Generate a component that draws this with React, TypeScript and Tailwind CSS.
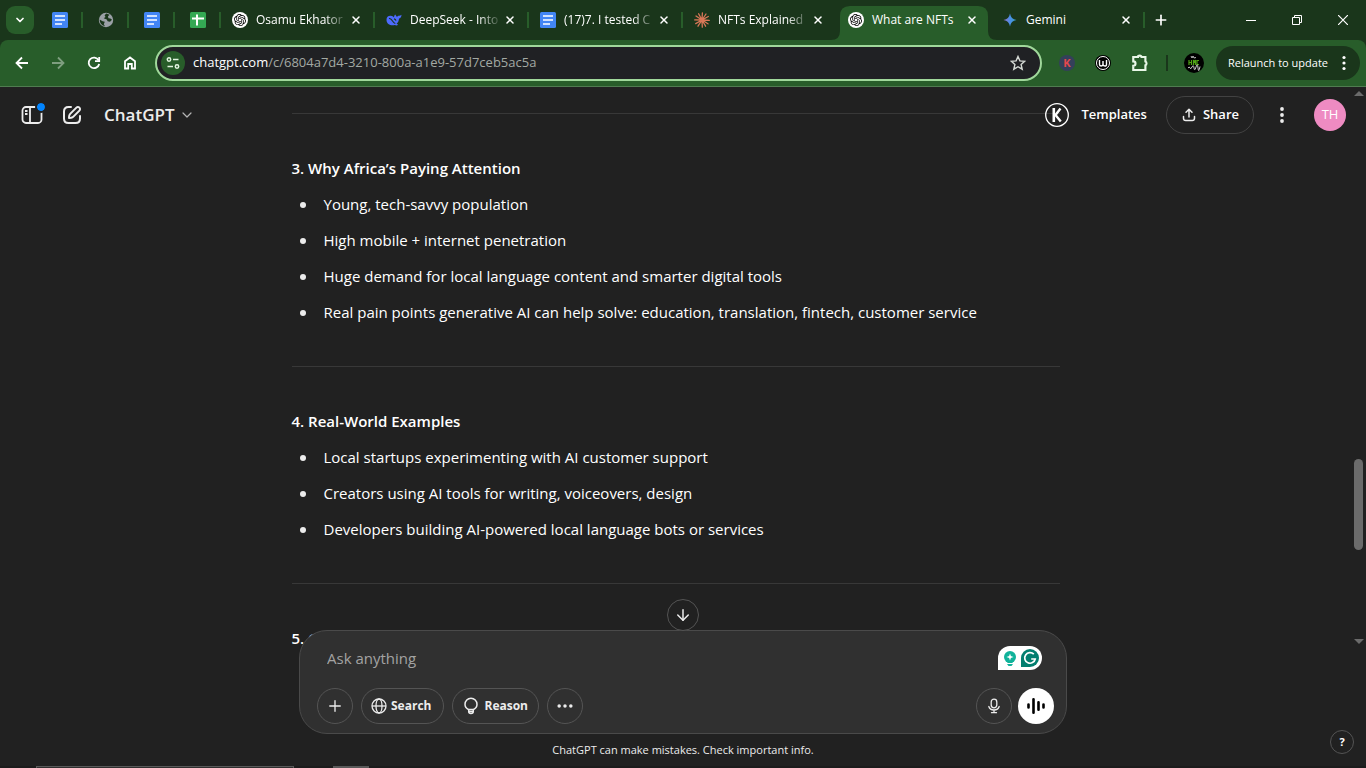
import type { ReactNode } from 'react';
import { ArrowDown, ChevronDown, Ellipsis, Plus, X } from 'lucide-react';
import { SiOpenai } from 'react-icons/si';

function DocsIcon() {
  return (
    <svg viewBox="0 0 16 16" className="size-4 shrink-0">
      <rect width="16" height="16" rx="1.5" fill="#4285f4" />
      <path d="M3 4h10M3 8h10M3 12h7" stroke="#fff" strokeWidth="1.6" />
    </svg>
  );
}

function SheetsIcon() {
  return (
    <svg viewBox="0 0 16 16" className="size-4 shrink-0">
      <rect width="16" height="16" rx="1.5" fill="#34a853" />
      <path d="M2 6.5h12M7 2.5v11" stroke="#fff" strokeWidth="2" />
    </svg>
  );
}

function WorldIcon() {
  return (
    <svg viewBox="0 0 16 16" className="size-4 shrink-0">
      <circle cx="8" cy="8" r="7.2" fill="#9aa0a6" />
      <path d="M8.3 1.6 6.6 3.2 7.5 5 5.7 6.2 8.8 7.4 9.6 9.2 12 9.8 14 7.8 12.4 6.4 10.4 6.2 10 4.2 11.6 2.8zM1.6 7.6 4.6 9.2 6.8 9.8 5.8 12.2 7 14.2C4 13.8 1.8 11.4 1.6 7.6z" fill="#1a361b" />
    </svg>
  );
}

function ChatIcon() {
  return (
    <span className="flex size-4 shrink-0 items-center justify-center rounded-full bg-white text-black">
      <SiOpenai className="size-3" />
    </span>
  );
}

function WhaleIcon() {
  return (
    <svg viewBox="0 0 16 16" className="size-4 shrink-0">
      <path d="M9.3 2.6c.5 1 .9 1.7 1.7 2.3.5-.9 1-1.2 2-1.2.8 0 1.7-.4 2.5-1-.1 2.2-.9 3.5-2.5 3.8-.2 2.4-1 4.2-2.4 5.3l1.6 1c-1.200.8-2.300.7-3.400.2C4.800 14.200.6 12 .5 7.900.4 5 2.400 3.500 4.900 3.800c1.400.2 2.200.8 3.100 1.600C8.100 4.200 8.400 3.300 9.300 2.600z" fill="#4d6bfe" />
      <path d="M3 6.300c2.200.3 3.200 2 4.300 3.700.5.800 1.200 1.300 2 1.500M8 6.900c1 .1 1.800.8 2 1.800" fill="none" stroke="#1a361b" strokeWidth="1.1" />
    </svg>
  );
}

function BurstIcon() {
  return (
    <svg viewBox="0 0 16 16" className="size-4 shrink-0" stroke="#d97757" strokeWidth="1.3" strokeLinecap="round">
      <path d="M8 8 8.4.8M8 8 12 2M8 8l6.300-3.500M8 8l7.300.4M8 8l6 3.800M8 8l3.600 6.200M8 8l.3 7.200M8 8l-4 6.200M8 8l-6.300 3.600M8 8 .7 7.900M8 8 2 4M8 8 4.600 1.700" />
    </svg>
  );
}

function GeminiIcon() {
  return (
    <svg viewBox="0 0 16 16" className="size-4 shrink-0">
      <defs>
        <linearGradient id="spark" x1="0" x2="1">
          <stop offset="0" stopColor="#9b72cb" />
          <stop offset="0.5" stopColor="#4a8fe8" />
          <stop offset="1" stopColor="#3aa0c8" />
        </linearGradient>
      </defs>
      <path d="M8 1.500C8.600 5.300 10.700 7.400 14.500 8 10.700 8.600 8.600 10.700 8 14.500 7.400 10.700 5.300 8.600 1.500 8 5.300 7.400 7.400 5.300 8 1.500z" fill="url(#spark)" />
    </svg>
  );
}

const pinned = [DocsIcon, WorldIcon, DocsIcon, SheetsIcon];

const tabs = [
  { title: 'Osamu Ekhator', icon: ChatIcon, fade: true },
  { title: 'DeepSeek - Into', icon: WhaleIcon, fade: true },
  { title: '(17)7. I tested C', icon: DocsIcon, fade: true },
  { title: 'NFTs Explained', icon: BurstIcon, fade: true, noLine: true },
  { title: 'What are NFTs', icon: ChatIcon, active: true },
  { title: 'Gemini', icon: GeminiIcon },
];

function TabStrip() {
  return (
    <div className="flex h-10 items-stretch pl-1.5">
      <button aria-label="Search tabs" className="mr-[3px] mt-1.5 flex size-7 shrink-0 items-center justify-center rounded-[9px] bg-[#285d2a]">
        <ChevronDown className="size-3" strokeWidth={3.5} />
      </button>
      {pinned.map((Icon, i) => (
        <button key={i} aria-label={`Pinned tab ${i + 1}`} className="flex w-[46px] shrink-0 items-center">
          <span className="flex flex-1 justify-center pl-0.5"><Icon /></span>
          <span className="h-4 w-0.5 bg-[#285d2a]" />
        </button>
      ))}
      {tabs.map((tab) => (
        <div
          key={tab.title}
          className={`relative flex max-w-[154px] flex-1 items-center pl-[11px] ${tab.active ? 'z-10' : ''}`}
        >
          {tab.active && (
            <svg viewBox="0 0 166 34" preserveAspectRatio="none" className="absolute inset-x-[-6px] bottom-0 h-[34px] w-[calc(100%+12px)]">
              <path d="M0 34q9 0 9-9V10Q9 0 19 0h128q10 0 10 10v15q0 9 9 9z" fill="#285d2a" />
            </svg>
          )}
          <a href="#" className="relative flex min-w-0 flex-1 items-center gap-2">
            <tab.icon />
            <span
              className={`min-w-0 flex-1 whitespace-nowrap text-[12px] leading-4 ${
                tab.fade ? '[mask-image:linear-gradient(to_right,black_75%,transparent)]' : ''
              }`}
            >
              {tab.title}
            </span>
          </a>
          <button aria-label={`Close ${tab.title}`} className="relative mr-[9px] flex size-4 items-center justify-center">
            <X className="size-3" strokeWidth={3} />
          </button>
          {!tab.active && !tab.noLine ? <span className="h-4 w-0.5 bg-[#285d2a]" /> : <span className="w-0.5" />}
        </div>
      ))}
      <button aria-label="New tab" className="ml-2 flex w-4 shrink-0 items-center justify-center">
        <Plus className="size-4" strokeWidth={2.5} />
      </button>
      <div className="ml-auto flex shrink-0">
        <button aria-label="Minimize" className="flex w-[46px] items-center justify-center">
          <span className="h-px w-2.5 bg-white" />
        </button>
        <button aria-label="Restore" className="flex w-[46px] items-center justify-center">
          <svg viewBox="0 0 10 10" className="size-2.5" fill="none" stroke="#fff">
            <path d="M.5 2.500h7v7h-7zM2.500 2.500v-2h7v7h-2" />
          </svg>
        </button>
        <button aria-label="Close window" className="flex w-[46px] items-center justify-center">
          <svg viewBox="0 0 10 10" className="size-2.5" stroke="#fff" strokeWidth="1.2">
            <path d="M0 0l10 10M10 0 0 10" />
          </svg>
        </button>
      </div>
    </div>
  );
}

function NavButton({ label, dim, children }: { label: string; dim?: boolean; children: ReactNode }) {
  return (
    <button aria-label={label} className={`flex size-9 shrink-0 items-center justify-center ${dim ? 'opacity-40' : ''}`}>
      <svg viewBox="0 0 16 16" className="size-4" fill="none" stroke="currentColor" strokeWidth="1.8">
        {children}
      </svg>
    </button>
  );
}

function Toolbar() {
  return (
    <div className="flex h-[47px] items-center rounded-t-lg border-b border-[#4f7c50] bg-[#285d2a] pl-1 pr-1.5">
      <NavButton label="Back"><path d="M14 8H3M8 2.500 2.500 8 8 13.500" /></NavButton>
      <NavButton label="Forward" dim><path d="M2 8h11M8 2.500 13.500 8 8 13.500" /></NavButton>
      <NavButton label="Reload">
        <path d="M12.600 5.200A5.300 5.300 0 1 0 13.200 9" />
        <path d="M13.200 2v4.200H9" />
      </NavButton>
      <NavButton label="Home"><path d="M3 13.500V6.300l5-3.800 5 3.800v7.200H9.800V9H6.200v4.500z" /></NavButton>
      <div className="ml-[7px] flex h-9 flex-1 items-center rounded-full border-2 border-[#a0d89b] bg-[#202124] pl-1 pr-3.5">
        <button aria-label="Site information" className="flex size-6 items-center justify-center rounded-full bg-[#285d2a]">
          <svg viewBox="0 0 16 16" className="size-4" fill="none" stroke="#e3f5e1" strokeWidth="1.5">
            <circle cx="4" cy="4.5" r="1.7" />
            <circle cx="12" cy="11.5" r="1.7" />
            <path d="M8 4.500h5.500M2.500 11.500H8" />
          </svg>
        </button>
        <a href="#" className="ml-2 flex-1 text-[13px] text-[#a3a9a3]">
          <span className="text-white">chatgpt.com</span>/c/6804a7d4-3210-800a-a1e9-57d7ceb5ac5a
        </a>
        <button aria-label="Bookmark this tab">
          <svg viewBox="0 0 16 16" className="size-4" fill="none" stroke="#d5dad5" strokeWidth="1.4">
            <path d="m8 1.500 1.900 4.400 4.800.4-3.600 3.200 1.100 4.700L8 11.700l-4.200 2.500 1.100-4.700L1.300 6.300l4.800-.4z" />
          </svg>
        </button>
      </div>
      <button aria-label="K extension" className="ml-[17px] flex size-4 items-center justify-center rounded-full bg-[#34405a] text-[11px] font-bold text-[#e5484d]">
        K
      </button>
      <button aria-label="W extension" className="ml-5 flex size-4 items-center justify-center rounded-full bg-black">
        <svg viewBox="0 0 16 16" className="size-4" fill="none" stroke="#fff">
          <circle cx="8" cy="8" r="6.5" strokeWidth="1" />
          <path d="M4.500 5v4.500q0 1.500 1.700 1.500T8 9.300V6v3.300Q8 11 9.800 11t1.700-1.500V5" strokeWidth="1.4" />
        </svg>
      </button>
      <button aria-label="Extensions" className="ml-5">
        <svg viewBox="0 0 16 16" className="size-[18px]" fill="none" stroke="#e9f7e8" strokeWidth="1.9">
          <path d="M2 2.700h4.200a1.600 1.200 0 0 1 3.200 0h3.400v4a1.300 1.700 0 0 1 0 3.300v4.200H2v-3.700a2 2 0 0 0 0-4z" />
        </svg>
      </button>
      <span className="ml-[17px] h-4 w-0.5 bg-[#1a361b]" />
      <button aria-label="Profile" className="ml-4 flex size-5 flex-col items-center justify-center rounded-full bg-black">
        <svg viewBox="0 0 20 20" className="size-5" fill="none">
          <path d="M7 3l1 2 1-2 1 2 2-.5" stroke="#bbb" />
          <path d="M5 7v5M5 9.500h2.500M7.500 7v5M9.500 12V7l1 2 1-2v5M15 7.500h-2v4h2" stroke="#4fa315" strokeWidth="1.2" />
          <path d="M4 15q1.500-2 2 0t2-1 2 1 2-1 2 1 2-1.500" stroke="#ccc" />
        </svg>
      </button>
      <button className="ml-3 flex h-[34px] items-center rounded-full bg-[#1a361b] pl-3 pr-3.5 text-[11px]">
        Relaunch to update
        <svg viewBox="0 0 4 16" className="ml-3.5 h-4 w-1" fill="currentColor">
          <circle cx="2" cy="2.5" r="1.6" />
          <circle cx="2" cy="8" r="1.6" />
          <circle cx="2" cy="13.5" r="1.6" />
        </svg>
      </button>
    </div>
  );
}

function ChatHeader() {
  return (
    <header className="absolute inset-x-0 top-0 z-10 flex h-14 items-center pl-5 pr-5">
      <button aria-label="Open sidebar" className="relative">
        <svg viewBox="0 0 24 24" className="size-6" fill="none" stroke="#ececec" strokeWidth="1.8">
          <rect x="2.5" y="4" width="19" height="16" rx="3.5" />
          <path d="M10 4v16M5 8h2.500M5 11h2.500" />
        </svg>
        <span className="absolute -right-px top-0 size-2 rounded-full bg-[#0285ff] outline-2 outline-[#212121]" />
      </button>
      <button aria-label="New chat" className="ml-4">
        <svg viewBox="0 0 24 24" className="size-6" fill="none" stroke="#ececec" strokeWidth="2">
          <path d="M11 4H8.500C5.500 4 4 5.500 4 8.500v7C4 18.500 5.500 20 8.500 20h7c3 0 4.500-1.500 4.500-4.500V13" strokeLinecap="round" />
          <path d="M16.400 4.600a2.100 2.100 0 0 1 3 3l-6 6c-.7.700-1.400 1-2.300 1.200l-2.100.2.200-2.100c.2-.9.500-1.600 1.200-2.300z" strokeLinejoin="round" />
        </svg>
      </button>
      <button className="ml-5 flex items-center gap-1 text-[17px] font-semibold text-[#ececec]">
        ChatGPT
        <ChevronDown className="size-4 text-[#b4b4b4]" strokeWidth={1.8} />
      </button>
      <a href="#" className="ml-auto flex items-center gap-3 text-[13px] font-semibold">
        <svg viewBox="0 0 24 24" className="size-6" fill="none" stroke="#fff">
          <circle cx="12" cy="12" r="11.3" strokeWidth="1.3" />
          <path d="M8.800 5v14" strokeWidth="2.6" />
          <path d="M15.500 5.500 10.500 12l5.300 6.500" strokeWidth="2.4" />
        </svg>
        Templates
      </a>
      <button className="ml-[19px] flex h-[38px] items-center gap-1.5 rounded-full border border-[#424242] px-3.5 text-[13px] font-semibold">
        <svg viewBox="0 0 16 16" className="size-4" fill="none" stroke="#ececec" strokeWidth="1.5" strokeLinecap="round" strokeLinejoin="round">
          <path d="M8 10V2.500M5 5.200l3-3 3 3M2.500 9.500v1.700c0 1.600.8 2.300 2.300 2.300h6.400c1.500 0 2.300-.7 2.300-2.300V9.500" />
        </svg>
        Share
      </button>
      <button aria-label="More options" className="ml-[26px]">
        <svg viewBox="0 0 4 18" className="h-[18px] w-1" fill="#ececec">
          <circle cx="2" cy="3" r="1.9" />
          <circle cx="2" cy="9" r="1.9" />
          <circle cx="2" cy="15" r="1.9" />
        </svg>
      </button>
      <button aria-label="Account" className="ml-[30px] size-8 rounded-full bg-[#ee8bc2] text-[13px] text-white">
        TH
      </button>
    </header>
  );
}

const sections = [
  {
    title: '3. Why Africa’s Paying Attention',
    items: [
      'Young, tech-savvy population',
      'High mobile + internet penetration',
      'Huge demand for local language content and smarter digital tools',
      'Real pain points generative AI can help solve: education, translation, fintech, customer service',
    ],
  },
  {
    title: '4. Real-World Examples',
    items: [
      'Local startups experimenting with AI customer support',
      'Creators using AI tools for writing, voiceovers, design',
      'Developers building AI-powered local language bots or services',
    ],
  },
  { title: '5. Challenges', items: [] },
];

function Conversation() {
  return (
    <div className="flex min-h-0 flex-1 overflow-hidden">
      <article className="min-w-0 flex-1 pt-[26px]">
        <div className="mx-auto max-w-3xl text-[15px] leading-7 text-white">
          {sections.map((section) => (
            <section key={section.title}>
              <hr className="mb-10 border-[#383838]" />
              <h3 className="font-semibold">{section.title}</h3>
              <ul className="mb-10 mt-2 space-y-2">
                {section.items.map((item) => (
                  <li key={item} className="flex items-center pl-2 before:mr-[18px] before:mt-0.5 before:size-1.5 before:shrink-0 before:rounded-full before:bg-[#ececec]">
                    {item}
                  </li>
                ))}
              </ul>
            </section>
          ))}
        </div>
      </article>
      {/* Scroll track */}
      <div className="flex w-[15px] flex-col items-center pb-1 pt-1">
        <svg viewBox="0 0 10 5" className="h-[5px] w-2.5"><path d="M0 5 5 0l5 5z" fill="#6b6b6b" /></svg>
        <div className="flex-[41]" />
        <div className="h-[91px] w-[9px] rounded-full bg-[#6b6b6b]" />
        <div className="flex-[10]" />
        <svg viewBox="0 0 10 5" className="h-[5px] w-2.5"><path d="M0 0l5 5 5-5z" fill="#6b6b6b" /></svg>
      </div>
    </div>
  );
}

const round = 'flex size-9 items-center justify-center rounded-full border border-[#545454]';
const pill = 'flex h-9 items-center gap-1 rounded-full border border-[#545454] pl-[9px] text-[12px] font-bold';

function Composer() {
  return (
    <div className="relative mx-auto -mt-[18px] w-full max-w-3xl rounded-[28px] border border-[#4a4a4a] bg-[#303030] px-[17px] pb-[9px] pt-[15px] text-[#ececec]">
      <button aria-label="Scroll to bottom" className="absolute -top-8 left-1/2 flex size-8 -translate-x-1/2 items-center justify-center rounded-full border border-[#545454] bg-[#212121]">
        <ArrowDown className="size-[18px]" strokeWidth={2} />
      </button>
      <div className="flex h-6 items-center justify-between pl-2.5 pr-[7px]">
        <input
          aria-label="Message"
          placeholder="Ask anything"
          className="min-w-0 flex-1 bg-transparent text-[15px] outline-none placeholder:text-[#a3a3a3]"
        />
        <button aria-label="Writing assistant">
          <svg viewBox="0 0 44 24" className="h-6 w-11">
            <path d="M0 24V12A12 12 0 0 1 12 0h20a12 12 0 0 1 0 24z" fill="#fff" />
            <circle cx="12" cy="11" r="6" fill="#10b29a" />
            <path d="M9.500 15h5v2h-5zM9 18h6l-1.500 2h-3z" fill="#10b29a" />
            <path d="m12 7.500.9 2.600 2.600.9-2.600.9-.9 2.600-.9-2.600-2.600-.9 2.600-.9z" fill="#fff" />
            <path d="M23 21v-9a9 9 0 1 1 9 9z" fill="#027e6f" />
            <path d="M35.800 8.200A5.300 5.300 0 1 0 37.200 13h-4" fill="none" stroke="#fff" strokeWidth="1.7" />
          </svg>
        </button>
      </div>
      <div className="mt-[18px] flex gap-2">
        <button aria-label="Add files" className={round}>
          <Plus className="size-[18px]" strokeWidth={1.8} />
        </button>
        <button className={`${pill} pr-3`}>
          <svg viewBox="0 0 16 16" className="size-4" fill="none" stroke="currentColor" strokeWidth="1.3">
            <circle cx="8" cy="8" r="7" />
            <ellipse cx="8" cy="8" rx="3" ry="7" />
            <path d="M1 8h14" />
          </svg>
          Search
        </button>
        <button className={`${pill} pr-2.5`}>
          <svg viewBox="0 0 18 18" className="size-[18px]" fill="none" stroke="currentColor" strokeWidth="1.5">
            <path d="M6.500 12.500C4.500 11.500 3 9.700 3 7.200a6 6 0 0 1 12 0c0 2.500-1.500 4.300-3.500 5.300zM6.700 12.500v2c0 1.300.6 2 2.300 2s2.300-.7 2.300-2v-2M6.700 14.500h4.600" />
          </svg>
          Reason
        </button>
        <button aria-label="More tools" className={round}>
          <Ellipsis className="size-5" strokeWidth={2.2} />
        </button>
        <button aria-label="Dictate" className={`${round} ml-auto`}>
          <svg viewBox="0 0 16 16" className="size-4" fill="none" stroke="currentColor" strokeWidth="1.3" strokeLinecap="round">
            <rect x="5.2" y="1.2" width="5.6" height="8.6" rx="2.8" />
            <path d="M2.800 8.500C3.500 10.800 5.500 12 8 12s4.500-1.200 5.200-3.500M8 12v2.500M5.500 14.700h5" />
          </svg>
        </button>
        <button aria-label="Voice mode" className="-ml-0.5 mr-[-5px] flex size-9 items-center justify-center rounded-full bg-white">
          <svg viewBox="0 0 20 18" className="h-[18px] w-5" stroke="#000" strokeWidth="2.6" strokeLinecap="round">
            <path d="M2.500 7.500v3M7.500 2.300v13.400M12.500 5.300v7.400M17.500 7.500v3" />
          </svg>
        </button>
      </div>
    </div>
  );
}

export default function App() {
  return (
    <div className="flex h-screen flex-col overflow-hidden bg-[#1a361b] font-['Open_Sans','Noto_Sans',sans-serif] text-white">
      <TabStrip />
      <Toolbar />
      <main className="relative flex min-h-0 flex-1 flex-col bg-[#212121]">
        <ChatHeader />
        <Conversation />
        <Composer />
        <p className="h-8 text-center text-[11px] leading-8 text-[#ececec]">
          ChatGPT can make mistakes. Check important info.
        </p>
        <button aria-label="Help" className="absolute bottom-3.5 right-3 size-6 rounded-full border border-[#545454] text-[11px] font-bold">
          ?
        </button>
        <div className="flex h-0.5 bg-[#1c1c1c] pl-9">
          <span className="w-[258px] border border-b-0 border-[#5a5a5a] bg-[#303030]" />
          <span className="ml-[39px] w-9 bg-[#5a5a5a]" />
        </div>
      </main>
    </div>
  );
}
